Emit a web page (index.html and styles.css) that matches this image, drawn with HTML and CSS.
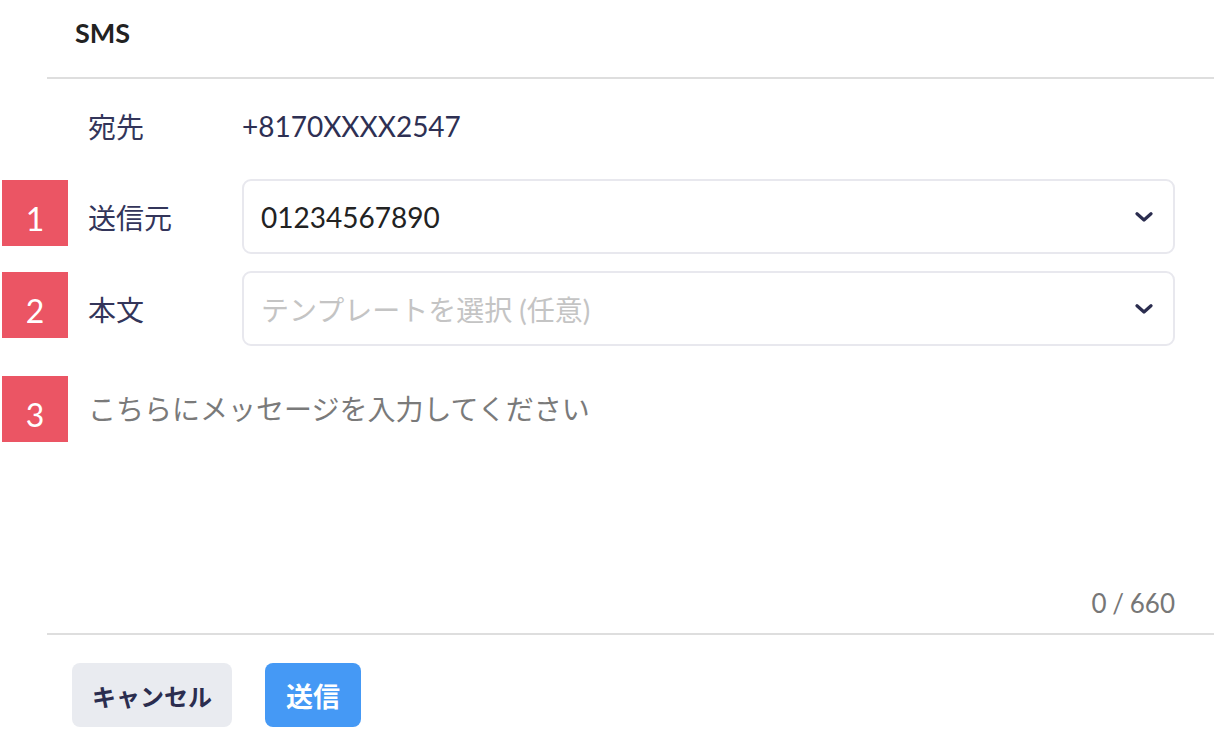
FILE: index.html
```html
<!DOCTYPE html>
<html lang="ja">
<head>
  <meta charset="UTF-8">
  <meta name="viewport" content="width=device-width, initial-scale=1.0">
  <link rel="stylesheet" href="styles.css">
</head>
<body>
  <div class="sms-dialog">
    <!-- Cabeçalho -->
    <div class="dialog-header">
      <h2>SMS</h2>
    </div>

    <div class="dialog-body">
      <div class="row row-to">
        <span class="row-label">宛先</span>
        <span class="row-value">+8170XXXX2547</span>
      </div>

      <div class="row row-field">
        <span class="step">1</span>
        <span class="row-label">送信元</span>
        <div class="select">
          <span class="select-text">01234567890</span>
          <svg class="chevron" width="18" height="10" viewBox="0 0 18 10"><path d="M2 1.8 L9 8 L16 1.8" fill="none" stroke="#2b2d4f" stroke-width="3.2" stroke-linecap="round" stroke-linejoin="round"/></svg>
        </div>
      </div>

      <div class="row row-field">
        <span class="step">2</span>
        <span class="row-label">本文</span>
        <div class="select">
          <span class="select-text placeholder">テンプレートを選択 (任意)</span>
          <svg class="chevron" width="18" height="10" viewBox="0 0 18 10"><path d="M2 1.8 L9 8 L16 1.8" fill="none" stroke="#2b2d4f" stroke-width="3.2" stroke-linecap="round" stroke-linejoin="round"/></svg>
        </div>
      </div>

      <div class="message">
        <span class="step">3</span>
        <div class="message-text">こちらにメッセージを入力してください</div>
        <div class="counter">0 / 660</div>
      </div>
    </div>

    <!-- Botões -->
    <div class="dialog-footer">
      <button class="btn btn-cancel">キャンセル</button>
      <button class="btn btn-send">送信</button>
    </div>
  </div>
</body>
</html>
```

FILE: styles.css
```css
/* Resetando margens */
* {
  margin: 0;
  padding: 0;
  box-sizing: border-box;
}

body {
  font-family: 'Lato', 'Noto Sans CJK JP', sans-serif;
  background-color: #fff;
  color: #33355a;
  width: 1214px;
  height: 752px;
  overflow: hidden;
}

.sms-dialog {
  margin-left: 47px;
}

/* Cabeçalho */
.dialog-header {
  height: 79px;
  padding: 16px 0 0 28px;
  border-bottom: 2px solid #dedede;
}

.dialog-header h2 {
  font-size: 27px;
  font-weight: 700;
  color: #222;
  line-height: 34px;
}

/* Conteúdo */
.dialog-body {
  padding: 0 39px 0 41px;
}

.row {
  position: relative;
  display: grid;
  grid-template-columns: 154px 1fr;
  align-items: center;
}

.row-to {
  height: 100px;
  padding-bottom: 6px;
}

.row-label {
  font-size: 28px;
  color: #33355a;
}

.row-value {
  font-size: 28px;
  color: #2e3053;
}

.row-field {
  margin-bottom: 17px;
}

/* Marcadores numerados */
.step {
  position: absolute;
  left: -86px;
  width: 66px;
  height: 66px;
  padding-top: 10px;
  background-color: #eb5564;
  color: #fff;
  font-size: 32px;
  display: flex;
  align-items: center;
  justify-content: center;
}

.row-field .step {
  top: 1px;
}

.select {
  height: 75px;
  border: 2px solid #e8e8ee;
  border-radius: 9px;
  display: flex;
  align-items: center;
  justify-content: space-between;
  padding: 0 20px 0 17px;
}

.select-text {
  font-size: 28px;
  color: #222;
}

.select-text.placeholder {
  color: #c4c4c4;
}

.chevron {
  display: block;
}

/* Área da mensagem */
.message {
  position: relative;
  height: 270px;
  padding-top: 27px;
}

.message .step {
  top: 13px;
}

.message-text {
  font-size: 28px;
  color: #7a7a7a;
  line-height: 38px;
}

.counter {
  position: absolute;
  right: 0;
  bottom: 14px;
  font-size: 26px;
  color: #777;
  word-spacing: -1px;
}

/* Rodapé */
.dialog-footer {
  border-top: 2px solid #dedede;
  padding: 28px 0 0 25px;
  display: flex;
  gap: 33px;
}

.btn {
  height: 64px;
  border: none;
  border-radius: 8px;
  font-family: 'Lato', 'Noto Sans CJK JP', sans-serif;
  font-size: 24px;
  font-weight: 700;
  padding: 0 20px;
  cursor: pointer;
}

.btn-cancel {
  background-color: #e9ebf0;
  color: #2b2d4f;
}

.btn-send {
  background-color: #4599f5;
  color: #fff;
  font-size: 27px;
  padding: 0 21px;
}
```
